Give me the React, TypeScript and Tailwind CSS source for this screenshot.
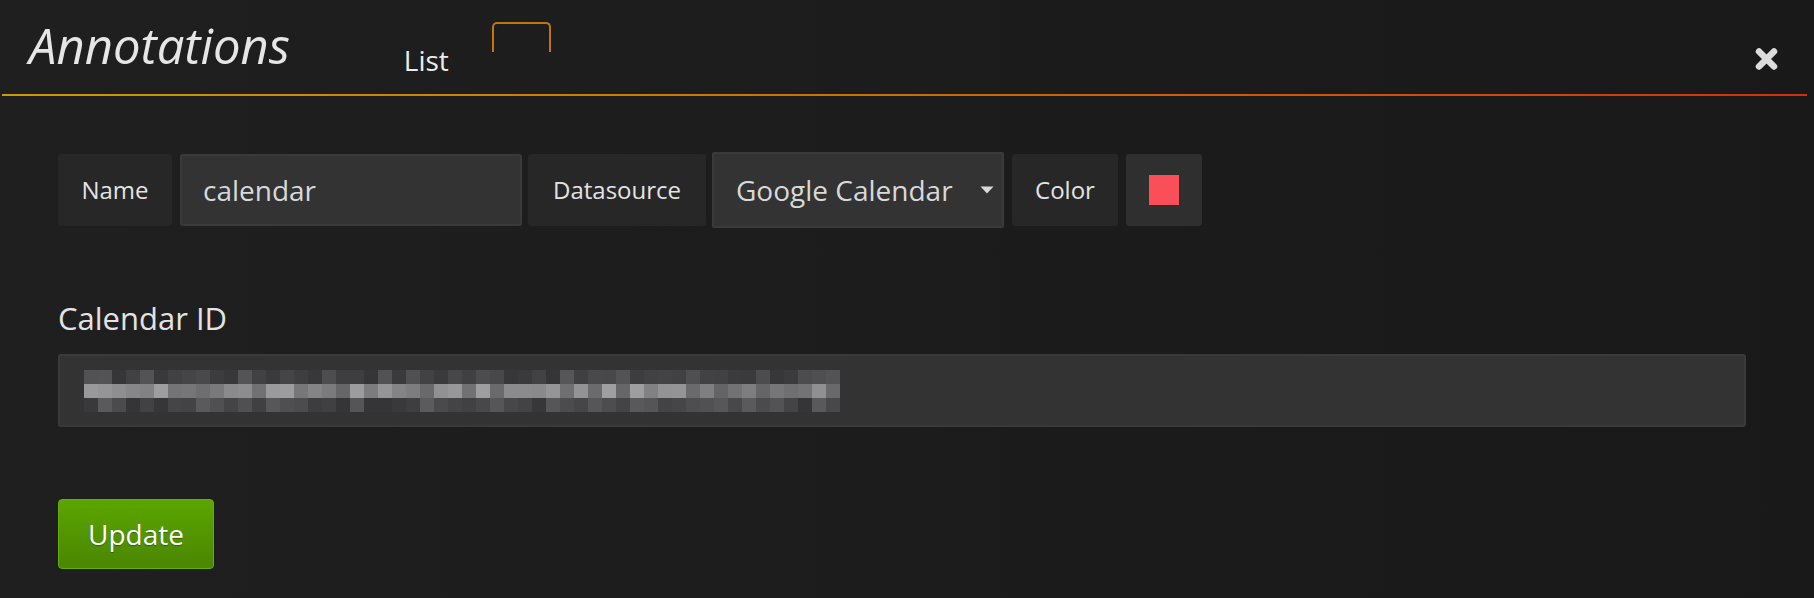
import { useMemo } from "react";

function seeded(seed: number) {
  let s = seed;
  return () => {
    s = (s * 9301 + 49297) % 233280;
    return s / 233280;
  };
}

function Mosaic() {
  const cells = useMemo(() => {
    const rnd = seeded(17);
    const rows: number[][] = [];
    for (let r = 0; r < 3; r++) {
      const row: number[] = [];
      for (let c = 0; c < 54; c++) {
        const v = rnd();
        if (r === 1) row.push(Math.round(100 + v * 60));
        else row.push(Math.round(52 + v * (r === 0 ? 34 : 40)));
      }
      rows.push(row);
    }
    return rows;
  }, []);
  return (
    <div className="flex flex-col">
      {cells.map((row, r) => (
        <div key={r} className="flex h-[14px]">
          {row.map((g, c) => (
            <div key={c} className="h-full w-[14px]" style={{ backgroundColor: `rgb(${g},${g},${g + 2})` }} />
          ))}
        </div>
      ))}
    </div>
  );
}

function Label({ children, width }: { children: string; width: string }) {
  return (
    <div className={`${width} flex h-[72px] flex-none items-center justify-center rounded-[3px] bg-[#272727] text-[24px] text-[#e3e3e3]`}>
      {children}
    </div>
  );
}

export default function App() {
  return (
    <div
      className="h-[598px] w-full overflow-hidden bg-gradient-to-r from-[#201f20] to-[#1a1919] text-[#d8d9da]"
      style={{ fontFamily: '"Open Sans", "Liberation Sans", sans-serif' }}
    >
      <div className="flex h-[94px] items-start pl-[29px] pr-[36px]">
        <h1 className="pt-[21px] text-[49px] leading-none font-normal italic text-[#e6e6e6]">Annotations</h1>
        <div className="ml-[114px] pt-[46px] text-[28px] leading-none text-[#ececec]">List</div>
        <div className="ml-[43px] mt-[22px] h-[30px] w-[59px] rounded-t-[5px] border-2 border-b-0 border-[#c0760f]" />
        <button className="ml-auto mt-[48px] flex h-[22px] w-[23px] items-center justify-center">
          <svg width="23" height="22" viewBox="0 0 23 22">
            <path d="M4 3.5 L19 18.5 M19 3.5 L4 18.5" stroke="#dcdcdc" strokeWidth="6.5" strokeLinecap="round" />
          </svg>
        </button>
      </div>
      <div className="ml-[2px] mr-[7px] h-[2px] bg-gradient-to-r from-[#c99a08] via-[#cd6c08] to-[#d42c0c]" />

      <div className="pl-[58px] pr-[68px] pt-[56px]">
        <div className="flex items-center">
          <Label width="w-[114px]">Name</Label>
          <div className="ml-[8px] flex h-[72px] w-[342px] flex-none items-center rounded-[3px] border-2 border-[#3a3a3a] bg-[#333333] pl-[21px] text-[28px] text-[#d8d9da]">
            calendar
          </div>
          <div className="ml-[6px]">
            <Label width="w-[178px]">Datasource</Label>
          </div>
          <div className="ml-[6px] flex h-[76px] w-[292px] flex-none items-center rounded-[2px] border-2 border-[#3a3a3a] bg-[#333333] pl-[22px] pr-[8px] text-[28px] text-[#d8d9da]">
            <span className="flex-1">Google Calendar</span>
            <svg width="14" height="8" viewBox="0 0 14 8">
              <path d="M0.5 0.5 H13.5 L7 7.5 Z" fill="#d8d9da" />
            </svg>
          </div>
          <div className="ml-[8px]">
            <Label width="w-[106px]">Color</Label>
          </div>
          <div className="ml-[8px] flex h-[72px] w-[76px] flex-none items-center justify-center rounded-[3px] bg-[#2f2f2f]">
            <div className="h-[30px] w-[30px] bg-[#fa4f58]" />
          </div>
        </div>

        <div className="mt-[75px] text-[31px] leading-none text-[#e3e3e3]">Calendar ID</div>
        <div className="mt-[20px] flex h-[73px] items-start rounded-[3px] border-2 border-[#3a3a3a] bg-[#333333] pl-[24px] pt-[14px]">
          <Mosaic />
        </div>

        <button className="mt-[72px] flex h-[70px] w-[156px] items-center justify-center rounded-[4px] border border-[#63ae0a] bg-gradient-to-b from-[#5ca600] to-[#4a8600] text-[28px] text-white [text-shadow:0_1px_1px_rgba(0,0,0,0.35)]">
          Update
        </button>
      </div>
    </div>
  );
}
